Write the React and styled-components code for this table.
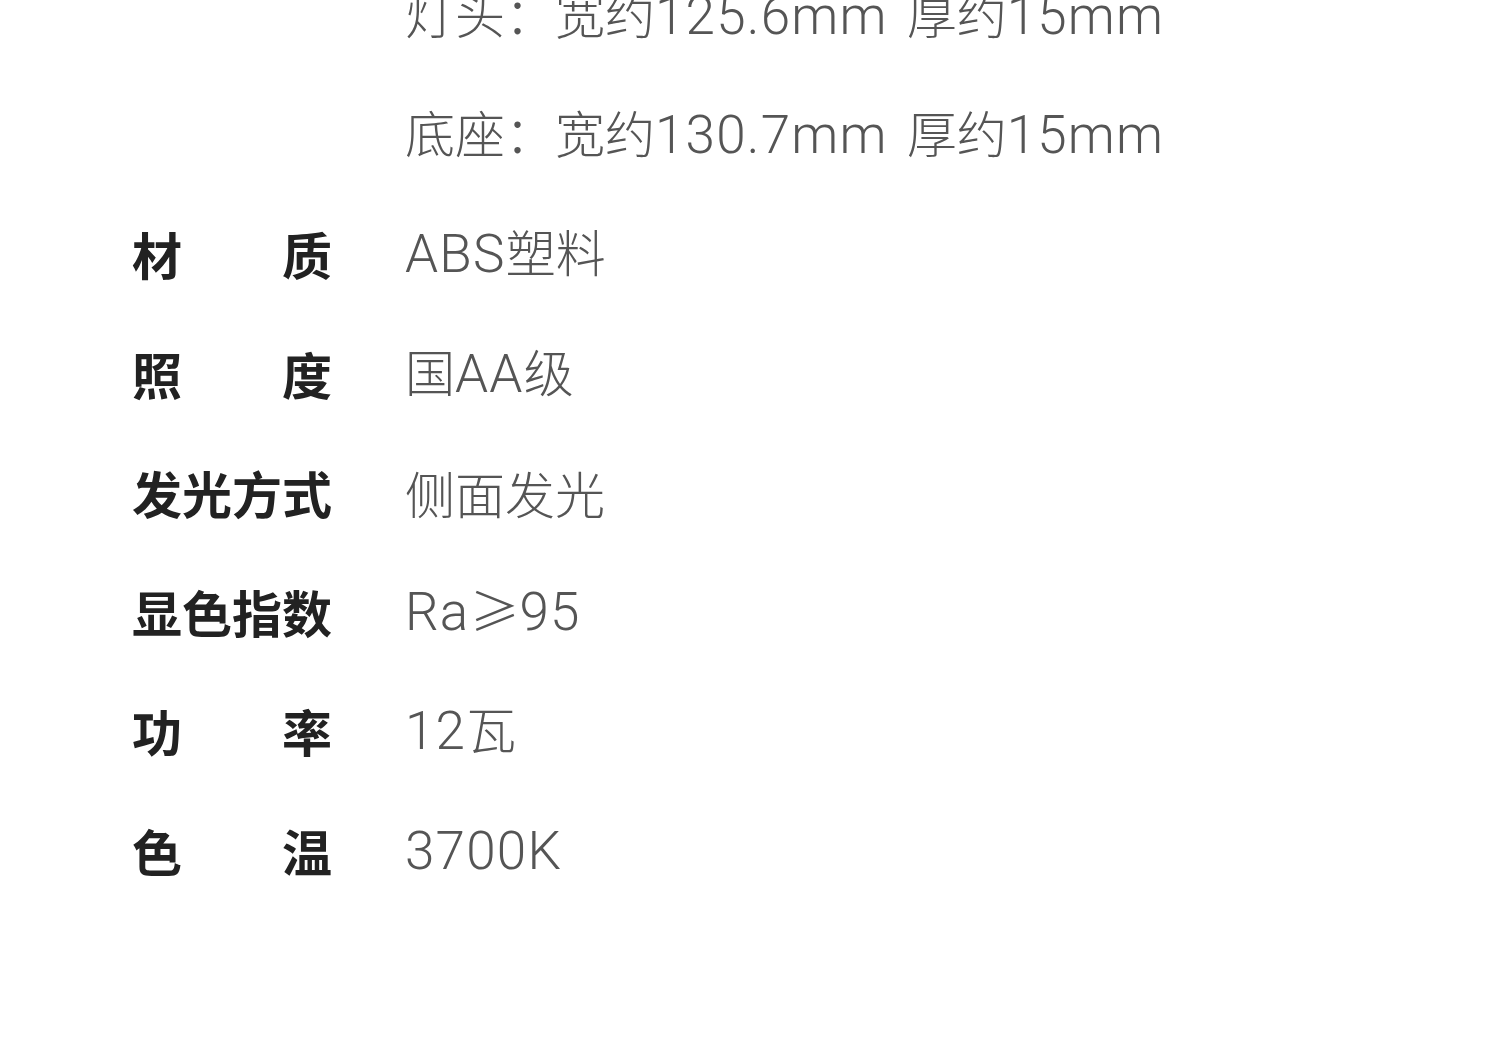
import React from "react";
import styled, { createGlobalStyle } from "styled-components";

const GlobalStyle = createGlobalStyle`
  html, body {
    margin: 0;
    padding: 0;
    background: #fff;
  }
  body {
    font-family: "Noto Sans CJK SC", "Noto Sans", sans-serif;
    overflow: hidden;
  }
`;

const Page = styled.div`
  width: 1500px;
  height: 1043px;
  overflow: hidden;
  background: #fff;
`;

const SpecList = styled.div`
  display: flex;
  flex-direction: column;
  margin-top: -45px;
  padding-left: 132px;
`;

const Row = styled.div`
  display: grid;
  grid-template-columns: 200px auto;
  column-gap: 73px;
  align-items: center;
  height: 119.3px;
  font-size: 50px;
  line-height: 1;
`;

const Label = styled.div`
  display: flex;
  justify-content: space-between;
  color: #222;
  font-weight: 700;
  white-space: nowrap;
`;

const Value = styled.div`
  color: #555;
  font-weight: 300;
  white-space: nowrap;
`;

// latin runs look larger and wider than the CJK glyphs in the original
const Latin = styled.span`
  font-family: Roboto, "Liberation Sans", sans-serif;
  font-size: 53px;
  font-weight: 300;
  letter-spacing: 1.2px;
`;

const Gap = styled.span`
  display: inline-block;
  width: ${(p) => p.w || 19}px;
`;

const specs = [
  { label: "", value: ["灯头：宽约125.6mm", "厚约15mm"] },
  { label: "", value: ["底座：宽约130.7mm", "厚约15mm"] },
  { label: "材质", value: ["ABS塑料"] },
  { label: "照度", value: ["国AA级"] },
  { label: "发光方式", value: ["侧面发光"] },
  { label: "显色指数", value: ["Ra≥95"] },
  { label: "功率", value: ["12瓦"] },
  { label: "色温", value: ["3700K"] },
];

const Text = ({ children }) =>
  children
    .split(/([A-Za-z0-9.]+)/)
    .filter(Boolean)
    .map((part, i) =>
      /^[A-Za-z0-9.]+$/.test(part) ? <Latin key={i}>{part}</Latin> : part
    );

const SpecRow = ({ label, value }) => (
  <Row>
    <Label>
      {label.split("").map((c, i) => (
        <span key={i}>{c}</span>
      ))}
    </Label>
    <Value>
      {value.map((v, i) => (
        <React.Fragment key={i}>
          {i > 0 && <Gap />}
          <Text>{v}</Text>
        </React.Fragment>
      ))}
    </Value>
  </Row>
);

const App = () => (
  <>
    <GlobalStyle />
    <Page>
      <SpecList>
        {specs.map((s, i) => (
          <SpecRow key={i} label={s.label} value={s.value} />
        ))}
      </SpecList>
    </Page>
  </>
);

export default App;
